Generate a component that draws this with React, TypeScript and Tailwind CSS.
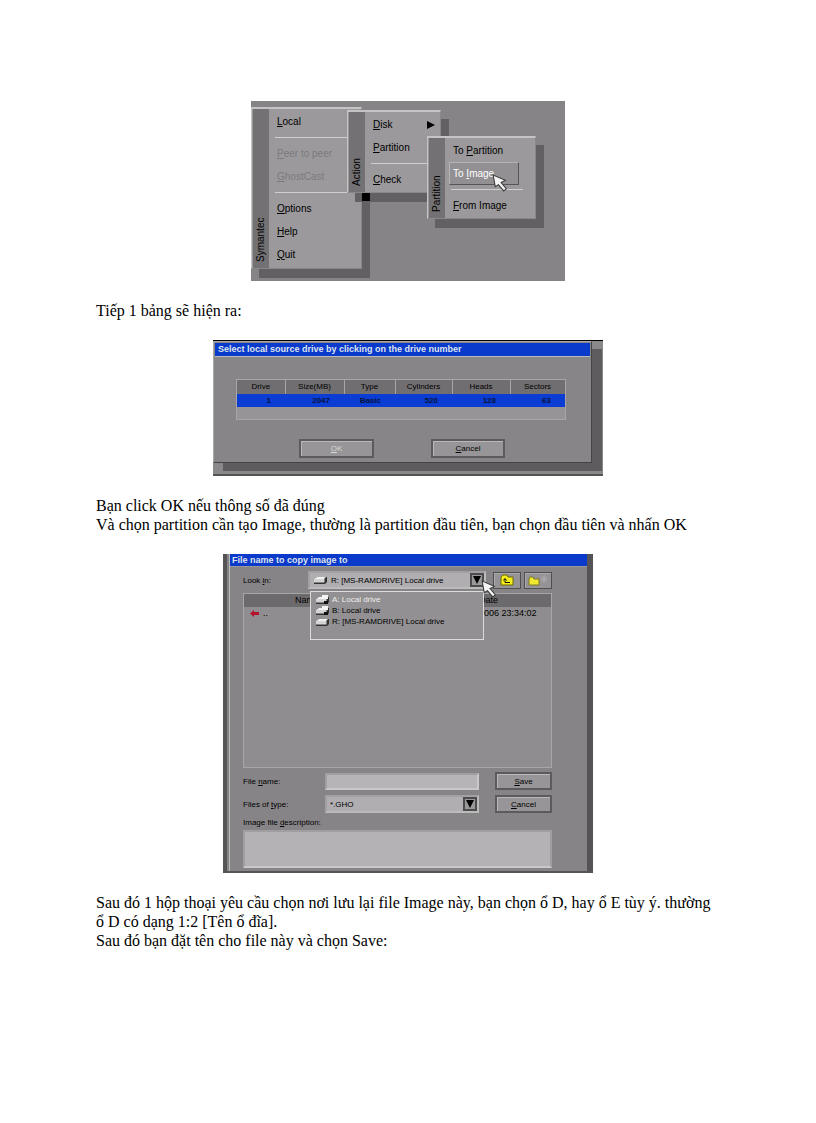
import type { ReactNode } from "react";

import clsx from "clsx";

// "&Local" -> underlined L, the keyboard shortcut letter
function KeyText({ text }: { text: string }) {
  const at = text.indexOf("&");
  if (at < 0) return <>{text}</>;
  return (
    <>
      {text.slice(0, at)}
      <span className="underline">{text[at + 1]}</span>
      {text.slice(at + 2)}
    </>
  );
}

function Cursor() {
  return (
    <svg viewBox="0 0 14 17" className="h-[18px] w-[15px]" aria-hidden="true">
      <path d="M1 1l2 11 3-2 5 6 2.5-2-5-6 4-2z" fill="#f6f6f6" stroke="#3a3a3a" strokeWidth="1" />
    </svg>
  );
}

function DriveIcon({ floppy = false }: { floppy?: boolean }) {
  return (
    <svg viewBox="0 0 14 10" className="h-[10px] w-[14px] shrink-0" aria-hidden="true">
      <path d="M0 4l3-2h10v5l-2 2H0z" fill="#333" />
      <path d="M0 4l3-2h9l-2 2z" fill="#f0f0f0" />
      <path d="M0 4h10.5v3.500H0z" fill="#d4d4d4" />
      {floppy && <path d="M6 0h6v4H6z" fill="#f4f4f4" />}
      {floppy && <path d="M8 6h4v3H8z" fill="#111" />}
    </svg>
  );
}

interface MenuProps {
  title: string;
  className: string;
  children: ReactNode;
}

function Menu({ title, className, children }: MenuProps) {
  return (
    <div
      className={clsx(
        "absolute flex border border-t-2 border-[#c4c4c4] border-r-[#888] border-b-[#888] bg-[#9b999b] pl-px shadow-[8px_9px_0_#626062]",
        className,
      )}
    >
      <div className="flex w-4 rotate-180 items-center bg-[#737173] pt-1.5 text-[10px] leading-4 [writing-mode:vertical-rl]">
        {title}
      </div>
      <div className="flex flex-1 flex-col pt-px pl-1">{children}</div>
    </div>
  );
}

interface MenuItemProps {
  text: string;
  disabled?: boolean;
  active?: boolean;
  arrow?: boolean;
}

function MenuItem({ text, disabled, active, arrow }: MenuItemProps) {
  return (
    <button
      disabled={disabled}
      className={clsx(
        "mr-4 flex h-[23px] items-center justify-between border pl-[3px] text-left",
        active ? "border-[#b4b4b4] border-r-[#555] border-b-[#555] bg-[#929092] text-white" : "border-transparent",
        disabled && "text-[#7c7a7c]",
      )}
    >
      <span>
        <KeyText text={text} />
      </span>
      {arrow && (
        <svg viewBox="0 0 8 8" className="-mr-3 h-2 w-2" aria-hidden="true">
          <path d="M0 0l8 4-8 4z" fill="#000" />
        </svg>
      )}
    </button>
  );
}

function Separator() {
  return <div className="my-1 mr-3 ml-0.5 h-px bg-[#cfcfcf]" />;
}

function GhostMenu() {
  return (
    <figure className="relative h-[180px] w-[314px] overflow-hidden bg-[#868486] text-[10px] leading-4">
      <Menu title="Symantec" className="top-[6px] left-0 h-[162px] w-[111px]">
        <MenuItem text="&Local" />
        <Separator />
        <MenuItem text="&Peer to peer" disabled />
        <MenuItem text="&GhostCast" disabled />
        <Separator />
        <MenuItem text="&Options" />
        <MenuItem text="&Help" />
        <MenuItem text="&Quit" />
      </Menu>
      <Menu title="Action" className="top-[9px] left-[96px] h-[83px] w-[94px]">
        <MenuItem text="&Disk" arrow />
        <MenuItem text="&Partition" />
        <Separator />
        <MenuItem text="&Check" />
      </Menu>
      <div className="absolute top-[92px] left-[111px] h-2 w-2 bg-black" />
      <Menu title="Partition" className="top-[35px] left-[176px] h-[83px] w-[109px]">
        <MenuItem text="To &Partition" />
        <MenuItem text="To &Image" active />
        <Separator />
        <MenuItem text="&From Image" />
      </Menu>
      <div className="absolute top-[73px] left-[241px]">
        <Cursor />
      </div>
    </figure>
  );
}

function DialogButton({ text, className }: { text: string; className: string }) {
  return (
    <button
      className={clsx(
        "flex items-center justify-center border-2 border-[#5c5a5c] bg-[#979597] shadow-[inset_1px_1px_0_#b8b8b8]",
        className,
      )}
    >
      <span>
        <KeyText text={text} />
      </span>
    </button>
  );
}

const columns = [
  { name: "Drive", value: "1", width: "w-[48px]" },
  { name: "Size(MB)", value: "2047", width: "w-[59px]" },
  { name: "Type", value: "Basic", width: "w-[51px]" },
  { name: "Cylinders", value: "520", width: "w-[57px]" },
  { name: "Heads", value: "128", width: "w-[58px]" },
  { name: "Sectors", value: "63", width: "w-[55px]" },
];

function DriveDialog() {
  return (
    <figure className="h-[136px] w-[390px] border-t border-b-2 border-t-black border-b-[#555] bg-[#8a888a] text-[8px] leading-3">
      <div className="mr-[11px] h-[122px] border border-[#a8a8a8] border-r-[#444] border-b-[#444] bg-[#878587] p-px shadow-[10px_8px_0_#5e5c5e]">
        <div className="h-[14px] border-b border-[#bbb] bg-[#0a3acb] pl-[3px] text-[9px] leading-[13px] font-bold text-[#dfe3ee]">
          Select local source drive by clicking on the drive number
        </div>
        <div className="mt-[22px] ml-[21px] h-[41px] w-[330px] border border-[#a6a6a6] bg-[#969496]">
          <table className="w-full table-fixed border-collapse">
            <thead>
              <tr className="h-[14px] bg-[#706e70]">
                {columns.map((column) => (
                  <th key={column.name} className={clsx("border-r border-[#a6a6a6] p-0 font-normal", column.width)}>
                    {column.name}
                  </th>
                ))}
              </tr>
            </thead>
            <tbody>
              <tr className="h-[13px] bg-[#0b3cd4] text-[#05143a]">
                {columns.map((column) => (
                  <td key={column.name} className="p-0 pr-[14px] text-right font-bold">
                    {column.value}
                  </td>
                ))}
              </tr>
            </tbody>
          </table>
        </div>
        <div className="mt-[19px] ml-[84px] flex gap-[57px]">
          <DialogButton text="&OK" className="h-[19px] w-[75px] text-[#d8d8d8]" />
          <DialogButton text="&Cancel" className="h-[19px] w-[74px]" />
        </div>
      </div>
    </figure>
  );
}

interface DropDownProps {
  id: string;
  value: string;
  className: string;
  icon?: ReactNode;
}

function DropDown({ id, value, className, icon }: DropDownProps) {
  return (
    <div
      className={clsx(
        "relative flex items-center border-2 border-[#a2a0a2] border-r-[#bbb] border-b-[#bbb] bg-[#b0aeb0]",
        className,
      )}
    >
      {icon && <div className="pl-1">{icon}</div>}
      <select id={id} className="min-w-0 flex-1 appearance-none bg-transparent pl-[3px] outline-none">
        <option>{value}</option>
      </select>
      <span className="pointer-events-none flex h-[14px] w-[14px] items-center justify-center border-2 border-[#4c4c4c] bg-[#999]">
        <svg viewBox="0 0 8 8" className="h-2 w-2" aria-hidden="true">
          <path d="M0 0h8L4 8z" fill="#000" />
        </svg>
      </span>
    </div>
  );
}

function FolderButton({ label, disabled, children }: { label: string; disabled?: boolean; children: ReactNode }) {
  return (
    <button
      aria-label={label}
      disabled={disabled}
      className="flex h-[17px] w-[28px] items-center justify-center border border-[#4f4f4f] bg-[#959395] shadow-[inset_1px_1px_0_#aaa]"
    >
      {children}
    </button>
  );
}

const drives = [
  { name: "A: Local drive", floppy: true },
  { name: "B: Local drive", floppy: true },
  { name: "R: [MS-RAMDRIVE] Local drive", floppy: false },
];

function SaveDialog() {
  return (
    <figure className="h-[319px] w-[370px] border-r-[6px] border-b-2 border-l-4 border-r-[#555355] border-b-[#555] border-l-[#555] bg-[#868486] text-[8px] leading-[11px]">
      <div className="ml-0.5 h-full border-l border-[#bbb]">
        <div className="h-[13px] border-b border-[#999] bg-[#0a3acb] pl-0.5 text-[9px] leading-[13px] font-bold text-[#dfe3ee]">
          File name to copy image to
        </div>
        <div className="w-[322px] pl-[13px]">
          <div className="relative flex h-[26px] items-center">
            <label htmlFor="look-in" className="w-[65px]">
              <KeyText text="Look &in:" />
            </label>
            <DropDown
              id="look-in"
              value="R: [MS-RAMDRIVE] Local drive"
              className="h-[18px] w-[178px]"
              icon={<DriveIcon />}
            />
            <div className="ml-auto flex gap-[3px]">
              <FolderButton label="Up one level">
                <svg viewBox="0 0 14 12" className="h-3 w-[14px]" aria-hidden="true">
                  <path d="M1 11V3l2-2h4l1 2h5v8z" fill="#f5ed18" stroke="#6c6800" />
                  <path d="M5 5v3.500h5M3.500 6.500L5 4.500l1.500 2" fill="none" stroke="#111" />
                </svg>
              </FolderButton>
              <FolderButton label="New folder" disabled>
                <svg viewBox="0 0 20 12" className="h-3 w-[20px]" aria-hidden="true">
                  <path d="M1 11V5l1-2h3l1 2h5v6z" fill="#f0e830" stroke="#7c7820" />
                  <path d="M16 1v8M12.500 5h7M13.500 2.500l5 5M18.500 2.500l-5 5" stroke="#adabad" />
                </svg>
              </FolderButton>
            </div>
            <ul className="absolute top-[24px] left-[67px] z-10 h-[49px] w-[174px] border border-[#dcdcdc] bg-[#929092] pt-[2px] pl-[5px]">
              {drives.map((drive, index) => (
                <li key={drive.name} className={clsx("flex items-center gap-[2px]", index === 0 && "text-[#eee]")}>
                  <DriveIcon floppy={drive.floppy} />
                  {drive.name}
                </li>
              ))}
            </ul>
            <div className="absolute top-[13px] left-[238px] z-20">
              <Cursor />
            </div>
          </div>
          <div className="h-[175px] border border-[#a6a6a6] bg-[#8f8d8f] text-[9px]">
            <table className="w-full table-fixed border-collapse">
              <thead>
                <tr className="h-[13px] bg-[#6c6a6c]">
                  <th className="p-0 pl-[51px] text-left font-normal">Name</th>
                  <th className="w-[72px] p-0 text-left font-normal">Date</th>
                </tr>
              </thead>
              <tbody>
                <tr className="h-[13px]">
                  <td className="p-0 pl-[6px]">
                    <span className="flex items-center gap-1">
                      <svg viewBox="0 0 9 7" className="h-[7px] w-[9px]" aria-hidden="true">
                        <path d="M0 3.500L4 0v2h5v3H4v2z" fill="#b5122c" />
                      </svg>
                      ..
                    </span>
                  </td>
                  <td className="p-0 pr-[15px] text-right whitespace-nowrap">2006 23:34:02</td>
                </tr>
              </tbody>
            </table>
          </div>
          <div className="mt-1 flex items-center">
            <label htmlFor="file-name" className="w-[82px]">
              <KeyText text="File &name:" />
            </label>
            <input
              id="file-name"
              className="h-[17px] w-[154px] border-2 border-[#a09ea0] border-r-[#c8c8c8] border-b-[#c8c8c8] bg-[#b6b4b6] px-1 outline-none"
            />
            <DialogButton text="&Save" className="ml-auto h-[18px] w-[57px]" />
          </div>
          <div className="mt-[5px] flex items-center">
            <label htmlFor="file-type" className="w-[82px]">
              <KeyText text="Files of &type:" />
            </label>
            <DropDown id="file-type" value="*.GHO" className="h-[18px] w-[154px]" />
            <DialogButton text="&Cancel" className="ml-auto h-[18px] w-[57px]" />
          </div>
          <label htmlFor="description" className="mt-1 block">
            <KeyText text="Image file &description:" />
          </label>
          <textarea
            id="description"
            className="mt-[2px] block h-[38px] w-full resize-none border-2 border-[#a09ea0] border-b-[#c8c8c8] bg-[#b4b2b4] outline-none"
          />
        </div>
      </div>
    </figure>
  );
}

export default function App() {
  return (
    <main className="min-h-screen bg-white px-24 pt-[101px] pb-24 font-['Liberation_Serif',serif] text-base leading-[19px] text-black">
      <div className="flex flex-col gap-5">
        <div className="flex justify-center font-['Liberation_Sans_Narrow','Liberation_Sans',sans-serif]">
          <GhostMenu />
        </div>
        <p>Tiếp 1 bảng sẽ hiện ra:</p>
        <div className="flex justify-center font-['Liberation_Sans_Narrow','Liberation_Sans',sans-serif]">
          <DriveDialog />
        </div>
        <div>
          <p>Bạn click OK nếu thông số đã đúng</p>
          <p>Và chọn partition cần tạo Image, thường là partition đầu tiên, bạn chọn đầu tiên và nhấn OK</p>
        </div>
        <div className="flex justify-center font-['Liberation_Sans_Narrow','Liberation_Sans',sans-serif]">
          <SaveDialog />
        </div>
        <div>
          <p>
            Sau đó 1 hộp thoại yêu cầu chọn nơi lưu lại file Image này, bạn chọn ổ D, hay ổ E tùy ý. thường ổ D có dạng
            1:2 [Tên ổ đĩa].
          </p>
          <p>Sau đó bạn đặt tên cho file này và chọn Save:</p>
        </div>
      </div>
    </main>
  );
}
